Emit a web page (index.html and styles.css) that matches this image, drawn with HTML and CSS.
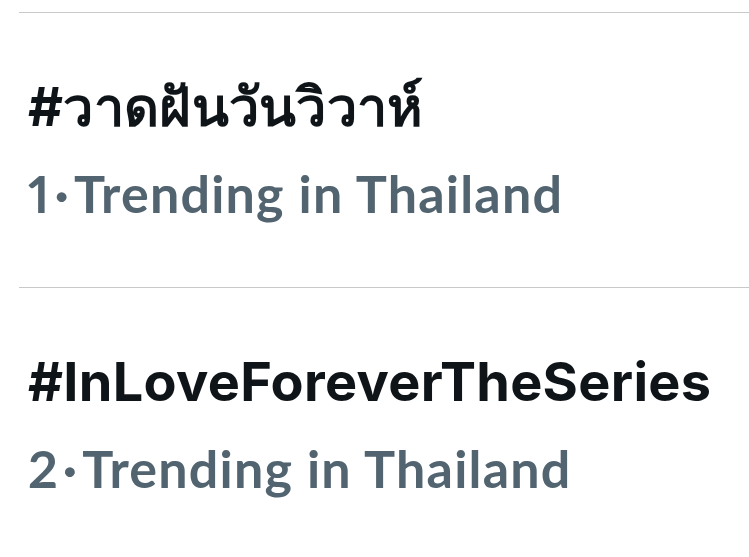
FILE: index.html
```html
<!DOCTYPE html>
<html lang="th">
<head>
<meta charset="utf-8">
<link rel="stylesheet" href="styles.css">
</head>
<body>
<main class="list">
  <section class="trend">
    <div class="title">#วาดฝันวันวิวาห์</div>
    <div class="meta"><span class="rank">1</span><span class="dot">·</span><span>Trending in Thailand</span></div>
  </section>
  <section class="trend">
    <div class="title">#InLoveForeverTheSeries</div>
    <div class="meta"><span class="rank">2</span><span class="dot">·</span><span>Trending in Thailand</span></div>
  </section>
</main>
</body>
</html>
```
FILE: styles.css
```css
html, body {
  margin: 0;
  padding: 0;
  background: #ffffff;
}
.list {
  padding-top: 12px;
  padding-left: 19px;
}
.trend {
  border-top: 1px solid #c9c9c9;
  padding-left: 9px;
  height: 274px;
}
.title {
  font-family: Inter, "Noto Sans", sans-serif;
  font-weight: 700;
  font-size: 54px;
  letter-spacing: 0.3px;
  color: #0f1419;
  margin-top: 67px;
  line-height: 1;
}
.meta {
  font-family: Lato, "Noto Sans", sans-serif;
  font-weight: 700;
  font-size: 52px;
  letter-spacing: 1.2px;
  font-variant-numeric: proportional-nums;
  color: #536471;
  margin-top: 33px;
  line-height: 1;
}
.rank {
  letter-spacing: 0;
}
.dot {
  margin: 0 4px 0 5px;
}
```
